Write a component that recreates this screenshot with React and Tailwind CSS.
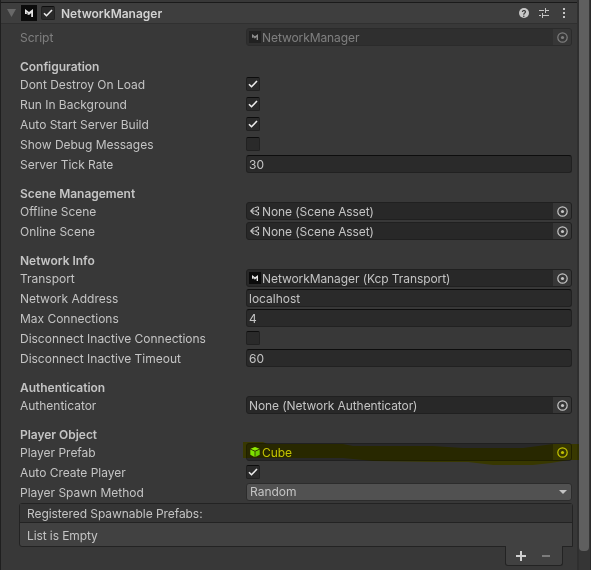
const Tri = ({ className, d }) => (
  <svg className={className} viewBox="0 0 9 8"><path d={d} fill="currentColor" /></svg>
);

const Check = ({ on = true, className = "" }) => (
  <span className={`flex h-[14px] w-[14px] shrink-0 items-center justify-center rounded-[2px] border border-[#212121] border-t-[#0d0d0d] bg-[#2a2a2a] ${className}`}>
    {on && (
      <svg className="h-[12px] w-[12px]" viewBox="0 0 12 12">
        <path d="M2 6.2 L4.5 8.7 L10 3" fill="none" stroke="#ececec" strokeWidth="1.6" />
      </svg>
    )}
  </span>
);

const Mirror = ({ className }) => (
  <svg className={className} viewBox="0 0 16 16">
    <rect width="16" height="16" fill="#0b0b0b" />
    <path d="M4 4 L8 7 L12 4 V12 H10.2 V8 L8 9.9 L5.6 9 L4 9 Z" fill="#e4e4e4" />
    <path d="M5.6 7.2 L7.4 8.6 L5.6 8.6 Z" fill="#0b0b0b" />
  </svg>
);

const SceneIcon = () => (
  <svg className="h-3 w-3 shrink-0" viewBox="0 0 12 12" fill="none" stroke="#c0c0c0">
    <path d="M4.8 3 L1.8 6 L4.8 9 M1.4 6 H5.6" strokeWidth="1.2" />
    <path d="M5.4 2.8 L9 1.8 M5.4 9.2 L9 10.2 M6.4 6 L9.2 4.4 M6.4 6 L9.2 7.6" strokeWidth="1" />
    <path d="M9.5 1.8 V5 M9.5 7 V10.2" strokeWidth="1.1" />
  </svg>
);

const CubeIcon = () => (
  <svg className="h-3 w-3 shrink-0" viewBox="0 0 12 12">
    <path d="M6 1 L10.5 2.8 L6 4.8 L1.5 2.8 Z" fill="#8fea20" />
    <path d="M1.3 3.6 L5.6 5.5 V11 L1.3 8.8 Z" fill="#7fe41c" />
    <path d="M10.7 3.6 L6.4 5.5 V11 L10.7 8.8 Z" fill="#6fd018" />
  </svg>
);

const Target = () => (
  <span className="flex w-[18px] shrink-0 items-center justify-end rounded-r-[2px] bg-[#373737] pr-[3px]">
    <svg className="h-[11px] w-[11px]" viewBox="0 0 11 11">
      <circle cx="5.5" cy="5.5" r="4.7" fill="none" stroke="#c4c4c4" strokeWidth="1.2" />
      <circle cx="5.5" cy="5.5" r="1.6" fill="#c4c4c4" />
    </svg>
  </span>
);

const Row = ({ label, dim, children }) => (
  <div className={`flex h-[18px] ${dim ? "opacity-50" : ""}`}>
    <div className="w-[226px] shrink-0 leading-[20px] tracking-[-0.015px]">{label}</div>
    {children}
  </div>
);

const Text = ({ children }) => (
  <div className="w-[326px] rounded-[3px] border border-[#212121] border-t-[#0d0d0d] bg-[#2a2a2a] pl-[2px] leading-[18px]">{children}</div>
);

const Obj = ({ icon, children }) => (
  <div className="flex w-[326px] rounded-[3px] border border-[#202020] bg-[#282828]">
    <div className="flex grow items-center gap-px pl-[2px] leading-[18px] tracking-[-0.08px]">{icon}<span className="pt-px">{children}</span></div>
    <Target />
  </div>
);

const Toggle = ({ label, on }) => (
  <Row label={label}><Check on={on} className="mt-[2px]" /></Row>
);

const Section = ({ title, children }) => (
  <section className="mt-[11px]">
    <h2 className="h-[18px] font-semibold leading-[20px] tracking-[-0.03px]">{title}</h2>
    <div className="flex flex-col gap-[2px]">{children}</div>
  </section>
);

export default function App() {
  return (
    <div className="flex h-[570px] w-[591px] overflow-hidden whitespace-nowrap border-l border-[#1f1f1f] bg-[#383838] font-['Inter',sans-serif] text-[12px] text-[#c4c4c4]">
      <main className="w-[576px] shrink-0">
        <header className="mt-[2px] flex h-[22px] items-center border-b border-t border-b-[#303030] border-t-[#1a1a1a] bg-[#3e3e3e] pl-[6px] pr-[8px]">
          <Tri className="h-2 w-[9px] text-[#686868]" d="M0 0H9L4.5 8Z" />
          <Mirror className="ml-[5px] h-4 w-4" />
          <Check className="ml-[4px]" />
          <h1 className="ml-[6px] grow pt-px font-semibold text-[#d2d2d2]">NetworkManager</h1>
          <div className="flex items-center text-[#c4c4c4]">
            <span className="flex h-[10px] w-[10px] items-center justify-center rounded-full bg-[#c8c8c8] text-[9px] font-bold leading-none text-[#3e3e3e]">?</span>
            <svg className="ml-[10px] h-[10px] w-[10px]" viewBox="0 0 10 10" fill="currentColor">
              <path d="M0 2h5v1H0zM6 0h1v5H6zM7 2h3v1H7zM0 7h2v1H0zM3 5h1v5H3zM4 7h6v1H4z" />
            </svg>
            <svg className="ml-[10px] h-[10px] w-[10px]" viewBox="0 0 10 10" fill="currentColor">
              <path d="M4 0h2v2H4zM4 4h2v2H4zM4 8h2v2H4z" />
            </svg>
          </div>
        </header>

        <div className="mt-[4px] pl-[19px]">
          <Row label="Script" dim>
            <Obj icon={<Mirror className="h-3 w-3" />}>NetworkManager</Obj>
          </Row>

          <Section title="Configuration">
            <Toggle label="Dont Destroy On Load" on />
            <Toggle label="Run In Background" on />
            <Toggle label="Auto Start Server Build" on />
            <Toggle label="Show Debug Messages" on={false} />
            <Row label="Server Tick Rate"><Text>30</Text></Row>
          </Section>

          <Section title="Scene Management">
            <Row label="Offline Scene"><Obj icon={<SceneIcon />}>None (Scene Asset)</Obj></Row>
            <Row label="Online Scene"><Obj icon={<SceneIcon />}>None (Scene Asset)</Obj></Row>
          </Section>

          <Section title="Network Info">
            <Row label="Transport"><Obj icon={<Mirror className="h-3 w-3" />}>NetworkManager (Kcp Transport)</Obj></Row>
            <Row label="Network Address"><Text>localhost</Text></Row>
            <Row label="Max Connections"><Text>4</Text></Row>
            <Toggle label="Disconnect Inactive Connections" on={false} />
            <Row label="Disconnect Inactive Timeout"><Text>60</Text></Row>
          </Section>

          <Section title="Authentication">
            <Row label="Authenticator"><Obj>None (Network Authenticator)</Obj></Row>
          </Section>

          <Section title="Player Object">
            <Row label="Player Prefab">
              <div className="relative flex">
                <Obj icon={<CubeIcon />}>Cube</Obj>
                <svg className="absolute -left-[3px] -top-[2px] h-[24px] w-[336px] mix-blend-multiply" viewBox="0 0 336 24">
                  <path d="M0 1 H20 L24 3 H100 L110 5 L190 5 L220 7 L280 7 L310 3 H336 V19 H326 L308 22 L290 24 H250 L225 21 L190 21 L130 20 L100 17 H0 Z" fill="#ffff00" />
                </svg>
              </div>
            </Row>
            <Toggle label="Auto Create Player" on />
            <Row label="Player Spawn Method">
              <div className="flex w-[326px] items-center justify-between rounded-[3px] border border-[#2c2c2c] bg-[#515151] pl-[3px] pr-[4px] leading-[16px]">
                <span>Random</span>
                <svg className="h-1 w-2" viewBox="0 0 8 4"><path d="M0 0H8L4 4Z" fill="#c4c4c4" /></svg>
              </div>
            </Row>
          </Section>

          <div className="-ml-px mt-[2px] w-[554px]">
            <div className="rounded-t-[3px] rounded-bl-[3px] border border-[#232323] bg-[#414141]">
              <div className="h-[19px] border-b border-[#232323] bg-[#353535] pl-[7px] leading-[20px] tracking-[-0.06px]">Registered Spawnable Prefabs:</div>
              <div className="h-[23px] pl-[7px] leading-[25px] tracking-[-0.1px]">List is Empty</div>
            </div>
            <div className="ml-auto mr-[10px] -mt-px flex h-[20px] w-[58px] items-center justify-around rounded-b-[3px] border border-t-0 border-[#232323] bg-[#414141] pl-[2px] pr-[4px]">
              <svg className="h-[10px] w-[10px]" viewBox="0 0 10 10"><path d="M4 0h2v4h4v2H6v4H4V6H0V4h4z" fill="#d0d0d0" /></svg>
              <svg className="h-[10px] w-[8px]" viewBox="0 0 8 10"><path d="M0 4h8v2H0z" fill="#7c7c7c" /></svg>
            </div>
          </div>
        </div>
      </main>
      <aside className="h-full w-[14px] border-l-2 border-r border-l-[#2f2f2f] border-r-[#2a2a2a] bg-[#353535]">
        <div className="h-[551px] w-[10px] rounded-b-[4px] bg-[#5f5f5f]" />
      </aside>
    </div>
  );
}
